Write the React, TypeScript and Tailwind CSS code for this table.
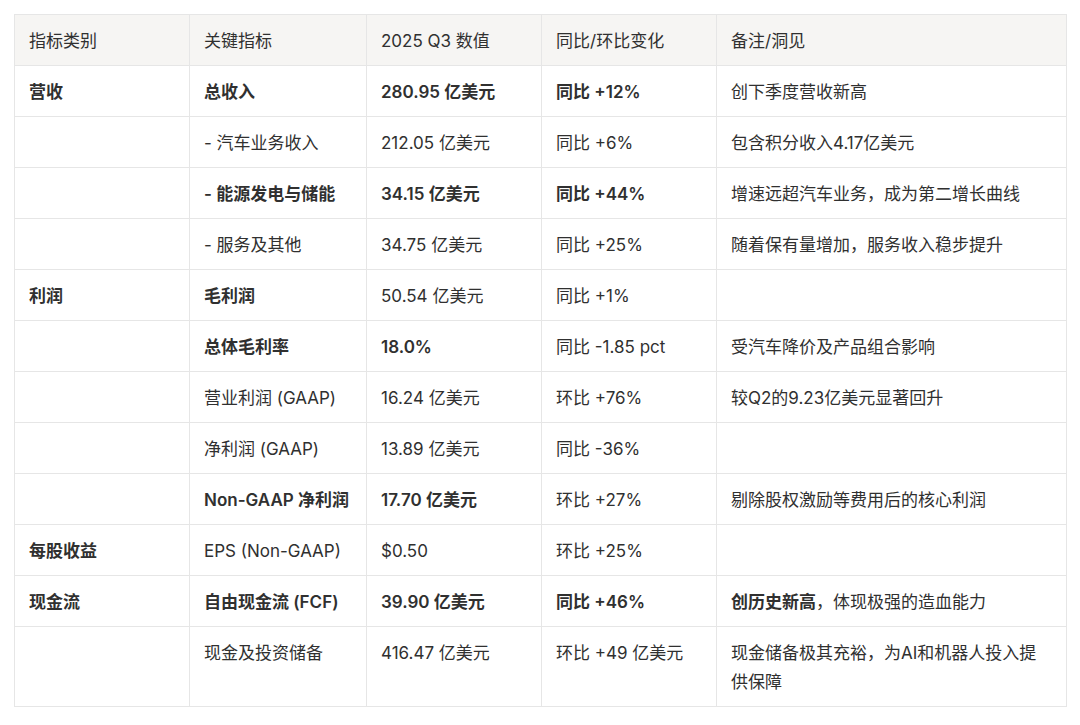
import React from "react";

type Cell = { t: React.ReactNode; b?: boolean };
const n = (t: React.ReactNode): Cell => ({ t });
const B = (t: React.ReactNode): Cell => ({ t, b: true });

const rows: Cell[][] = [
  [B("营收"), B("总收入"), B("280.95 亿美元"), B("同比 +12%"), n("创下季度营收新高")],
  [n(""), n("- 汽车业务收入"), n("212.05 亿美元"), n("同比 +6%"), n("包含积分收入4.17亿美元")],
  [n(""), B("- 能源发电与储能"), B("34.15 亿美元"), B("同比 +44%"), n("增速远超汽车业务，成为第二增长曲线")],
  [n(""), n("- 服务及其他"), n("34.75 亿美元"), n("同比 +25%"), n("随着保有量增加，服务收入稳步提升")],
  [B("利润"), B("毛利润"), n("50.54 亿美元"), n("同比 +1%"), n("")],
  [n(""), B("总体毛利率"), B("18.0%"), n("同比 -1.85 pct"), n("受汽车降价及产品组合影响")],
  [n(""), n("营业利润 (GAAP)"), n("16.24 亿美元"), n("环比 +76%"), n("较Q2的9.23亿美元显著回升")],
  [n(""), n("净利润 (GAAP)"), n("13.89 亿美元"), n("同比 -36%"), n("")],
  [n(""), B("Non-GAAP 净利润"), B("17.70 亿美元"), n("环比 +27%"), n("剔除股权激励等费用后的核心利润")],
  [B("每股收益"), n("EPS (Non-GAAP)"), n("$0.50"), n("环比 +25%"), n("")],
  [
    B("现金流"),
    B("自由现金流 (FCF)"),
    B("39.90 亿美元"),
    B("同比 +46%"),
    n(
      <>
        <span className="font-semibold">创历史新高</span>，体现极强的造血能力
      </>
    ),
  ],
  [n(""), n("现金及投资储备"), n("416.47 亿美元"), n("环比 +49 亿美元"), n("现金储备极其充裕，为AI和机器人投入提供保障")],
];

const headers = ["指标类别", "关键指标", "2025 Q3 数值", "同比/环比变化", "备注/洞见"];
const widths = ["w-[175px]", "w-[177px]", "w-[175px]", "w-[175px]", "w-[350px]"];

export default function App() {
  return (
    <div
      className="w-[1080px] h-[725px] bg-white pt-[14px] pl-[14px] text-[#303030]"
      style={{ fontFamily: 'Inter, "Noto Sans CJK SC", sans-serif' }}
    >
      <table className="border-collapse table-fixed w-[1053px] text-[17px] leading-[29px]">
        <thead>
          <tr className="bg-[#f6f5f3]">
            {headers.map((h, i) => (
              <th
                key={i}
                className={`${widths[i]} border border-[#e6e6e6] px-[14px] pt-[11.5px] pb-[9.5px] text-left font-normal align-top`}
              >
                {h}
              </th>
            ))}
          </tr>
        </thead>
        <tbody>
          {rows.map((r, ri) => (
            <tr key={ri}>
              {r.map((c, ci) => (
                <td
                  key={ci}
                  className={`border border-[#e6e6e6] px-[14px] pt-[11.5px] pb-[9.5px] align-top ${
                    c.b ? "font-semibold" : "font-normal"
                  }`}
                >
                  {c.t}
                </td>
              ))}
            </tr>
          ))}
        </tbody>
      </table>
    </div>
  );
}
